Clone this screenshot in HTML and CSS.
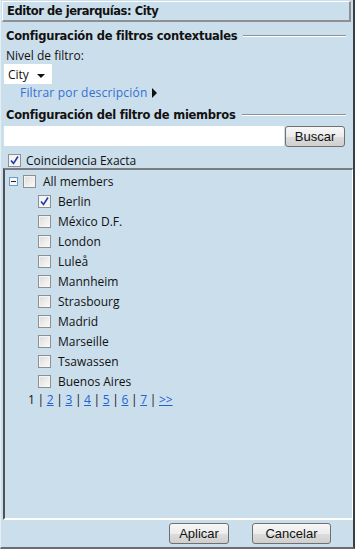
FILE: index.html
```html
<!DOCTYPE html>
<html lang="es">
<head>
    <meta charset="UTF-8">
    <title>Editor de jerarquías</title>
    <link rel="stylesheet" href="styles.css">
</head>
<body>
    <div id="editor">
        <div class="title-bar">Editor de jerarquías: City</div>

        <div class="section-head first">
            <span>Configuración de filtros contextuales</span>
            <span class="rule"></span>
        </div>
        <div class="field-label">Nivel de filtro:</div>
        <div class="level-select">City <span class="caret"></span></div>
        <a class="desc-link" href="#">Filtrar por descripción <span class="arrow"></span></a>

        <div class="section-head second">
            <span>Configuración del filtro de miembros</span>
            <span class="rule"></span>
        </div>
        <div class="search-row">
            <input class="search-input" type="text">
            <button class="btn btn-search">Buscar</button>
        </div>
        <label class="check-row">
            <span class="check checked"></span>Coincidencia Exacta
        </label>

        <div class="tree-panel">
            <div class="tree-root">
                <span class="toggle"></span>
                <span class="check"></span>
                <span class="root-label">All members</span>
            </div>
            <ul class="tree-items">
                <li><span class="check checked"></span>Berlin</li>
                <li><span class="check"></span>México D.F.</li>
                <li><span class="check"></span>London</li>
                <li><span class="check"></span>Luleå</li>
                <li><span class="check"></span>Mannheim</li>
                <li><span class="check"></span>Strasbourg</li>
                <li><span class="check"></span>Madrid</li>
                <li><span class="check"></span>Marseille</li>
                <li><span class="check"></span>Tsawassen</li>
                <li><span class="check"></span>Buenos Aires</li>
            </ul>
            <div class="pager">
                1 | <a href="#">2</a> | <a href="#">3</a> | <a href="#">4</a> | <a href="#">5</a> | <a href="#">6</a> | <a href="#">7</a> | <a href="#">&gt;&gt;</a>
            </div>
        </div>

        <div class="footer">
            <button class="btn btn-apply">Aplicar</button>
            <button class="btn btn-cancel">Cancelar</button>
        </div>
    </div>
</body>
</html>
```

FILE: styles.css
```css
html, body {
    margin: 0;
    padding: 0;
    height: 100%;
}

body {
    background: #cbdeeb;
    font-family: 'Open Sans', 'Noto Sans', sans-serif;
    font-size: 12px;
    color: #111;
}

#editor {
    width: 355px;
    height: 549px;
    box-sizing: border-box;
    display: flex;
    flex-direction: column;
    background: #cbdeeb;
    border-right: 2px solid #3b3f44;
    border-bottom: 2px solid #6a6e73;
    border-left: 1px solid #e6eef4;
}

/* Title bar, raised */
.title-bar {
    margin: 1px 2px 0 1px;
    height: 21px;
    box-sizing: border-box;
    padding: 2px 0 0 4px;
    font-family: 'DejaVu Sans', sans-serif;
    font-weight: bold;
    font-size: 11.5px;
    letter-spacing: -0.45px;
    border-top: 1px solid #ffffff;
    border-left: 1px solid #ffffff;
    border-right: 2px solid #8e9092;
    border-bottom: 2px solid #8e9092;
}

.section-head {
    display: flex;
    align-items: center;
    gap: 6px;
    padding: 0 5px 0 5px;
    height: 20px;
    font-family: 'DejaVu Sans', sans-serif;
    font-weight: bold;
    font-size: 11.5px;
    letter-spacing: -0.25px;
}

.section-head.first {
    margin-top: 4px;
}

.section-head.second {
    margin-top: 3px;
}

.section-head .rule {
    flex: 1;
    height: 1px;
    background: #8d9196;
    border-bottom: 1px solid #ffffff;
    margin-right: 2px;
    margin-top: -1px;
}

.field-label {
    padding: 1px 0 0 5px;
    height: 18px;
    box-sizing: border-box;
}

.level-select {
    margin: 0 0 0 3px;
    width: 48px;
    height: 20px;
    box-sizing: border-box;
    background: #ffffff;
    padding: 2px 0 0 4px;
    display: flex;
    align-items: center;
    gap: 8px;
    line-height: 16px;
}

.caret {
    width: 0;
    height: 0;
    border-left: 4px solid transparent;
    border-right: 4px solid transparent;
    border-top: 4px solid #111;
    margin-top: 1px;
}

.desc-link {
    display: flex;
    align-items: center;
    gap: 5px;
    margin: -1px 0 0 19px;
    height: 19px;
    color: #3470d4;
    letter-spacing: 0.2px;
    text-decoration: none;
}

.arrow {
    width: 0;
    height: 0;
    border-top: 5px solid transparent;
    border-bottom: 5px solid transparent;
    border-left: 5px solid #111;
}

.search-row {
    display: flex;
    align-items: center;
    margin: 0 0 0 3px;
    height: 22px;
}

.search-input {
    width: 280px;
    height: 20px;
    box-sizing: border-box;
    border: none;
    background: #ffffff;
    margin: 0;
}

.btn {
    font-family: 'Liberation Sans', Arial, sans-serif;
    font-size: 13px;
    color: #111;
    border: 1px solid #707070;
    border-radius: 3px;
    background: linear-gradient(to bottom, #f7f7f7 0%, #ececec 50%, #dddddd 51%, #cfcfcf 100%);
    padding: 0;
    height: 21px;
    cursor: pointer;
}

.btn-search {
    width: 60px;
    margin-left: 1px;
}

.check-row {
    display: flex;
    align-items: center;
    gap: 5px;
    margin: 5px 0 0 7px;
    height: 16px;
}

.check {
    display: inline-block;
    flex-shrink: 0;
    width: 11px;
    height: 11px;
    border: 1px solid #8f8f8f;
    background: linear-gradient(135deg, #dcdcdc, #fbfbfb);
    box-shadow: inset 0 0 0 1px #f4f4f4;
}

.check.checked {
    background: #f4f4f4 url("data:image/svg+xml,%3Csvg xmlns='http://www.w3.org/2000/svg' width='11' height='11'%3E%3Cpath d='M2 5.5 L4.5 8.5 L9 1.5' fill='none' stroke='%23223aa6' stroke-width='1.6'/%3E%3C/svg%3E") no-repeat center;
}

/* Member tree, sunken */
.tree-panel {
    flex: 1;
    margin: 0 0 0 2px;
    border-top: 2px solid #797d81;
    border-left: 2px solid #4e5256;
    border-right: 1px solid #ffffff;
    border-bottom: 2px solid #ffffff;
    padding-top: 1px;
}

.tree-root {
    display: flex;
    align-items: center;
    height: 20px;
    padding-left: 4px;
}

.toggle {
    width: 7px;
    height: 7px;
    border: 1px solid #6f9bc4;
    background: #f5f8fb;
    position: relative;
    margin-right: 5px;
}

.toggle::after {
    content: "";
    position: absolute;
    left: 1px;
    top: 3px;
    width: 5px;
    height: 1px;
    background: #222;
}

.root-label {
    margin-left: 7px;
}

.tree-items {
    list-style: none;
    margin: 0;
    padding: 0 0 0 33px;
}

.tree-items li {
    display: flex;
    align-items: center;
    gap: 7px;
    height: 20px;
}

.pager {
    padding-left: 23px;
    height: 18px;
    line-height: 18px;
    word-spacing: -0.5px;
}

.pager a {
    color: #1f62d0;
}

.footer {
    height: 27px;
    display: flex;
    align-items: center;
    padding-left: 168px;
    gap: 23px;
}

.btn-apply {
    width: 60px;
}

.btn-cancel {
    width: 79px;
}
```
